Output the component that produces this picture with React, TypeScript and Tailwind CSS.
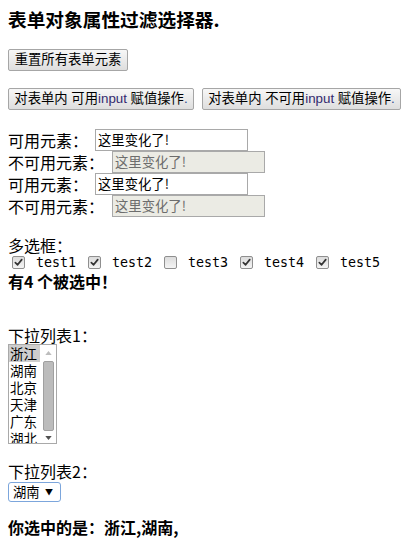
import React from "react";

const cjk = "font-['Noto_Sans_CJK_SC','Liberation_Sans',sans-serif]";
const ui = "font-['Liberation_Sans','Noto_Sans_CJK_SC',sans-serif]";

function OldButton({ width, children }: { width: string; children: React.ReactNode }) {
  return (
    <button
      type="button"
      className={`${width} ${ui} flex h-[22px] items-center justify-center rounded-[2px] border border-[#a6a6a6] bg-gradient-to-b from-[#f7f7f7] to-[#dedede] text-[13.33px] leading-none text-black`}
    >
      {children}
    </button>
  );
}

function Check({ checked }: { checked: boolean }) {
  return (
    <span className="ml-[4px] mr-[3px] flex h-[13px] w-[13px] items-center justify-center rounded-[2px] border border-[#8f8f8f] bg-gradient-to-b from-[#dcdcdc] to-[#f4f4f4]">
      {checked && (
        <svg viewBox="0 0 10 10" className="h-[9px] w-[9px]">
          <path d="M1.5 5.2 L4 7.6 L8.6 1.8" fill="none" stroke="#333" strokeWidth="1.9" strokeLinecap="round" strokeLinejoin="round" />
        </svg>
      )}
    </span>
  );
}

const items = [
  { label: "test1", checked: true },
  { label: "test2", checked: true },
  { label: "test3", checked: false },
  { label: "test4", checked: true },
  { label: "test5", checked: true },
];

const cities = ["浙江", "湖南", "北京", "天津", "广东", "湖北"];

function InputRow({ enabled }: { enabled: boolean }) {
  return (
    <div className="flex h-[22px] items-center">
      <span className={`${enabled ? "w-[87px]" : "w-[104px]"} text-[16px] leading-none`}>
        {enabled ? "可用元素：" : "不可用元素："}
      </span>
      <div
        className={`flex h-[22px] w-[153px] items-center border border-[#a9a9a9] px-[2px] text-[13.33px] ${
          enabled ? "bg-white text-black" : "bg-[#ebebe4] text-[#6d6d6d]"
        }`}
      >
        这里变化了!
      </div>
    </div>
  );
}

export default function App() {
  return (
    <div className={`${cjk} min-h-[550px] w-[415px] bg-white px-[8px] text-black`}>
      <h3 className="mt-[8px] h-[22px] text-[18.7px] font-bold leading-[22px]">表单对象属性过滤选择器.</h3>

      <div className="mt-[19px]">
        <OldButton width="w-[120px]">重置所有表单元素</OldButton>
      </div>

      <div className="mt-[17px] flex gap-[8px]">
        <OldButton width="w-[186px]">
          对表单内 可用<span className="text-[#33296f]">input</span>&nbsp;赋值操作<span className="text-[#2c4a8c]">.</span>
        </OldButton>
        <OldButton width="w-[199px]">
          对表单内 不可用<span className="text-[#33296f]">input</span>&nbsp;赋值操作<span className="text-[#2c4a8c]">.</span>
        </OldButton>
      </div>

      <div className="mt-[19px] flex flex-col">
        <InputRow enabled />
        <InputRow enabled={false} />
        <InputRow enabled />
        <InputRow enabled={false} />
      </div>

      <p className="mt-[19px] h-[18px] text-[16px] leading-[18px]">多选框：</p>
      <div className="flex h-[18px] items-center">
        {items.map((it) => (
          <div key={it.label} className="flex items-center">
            <Check checked={it.checked} />
            <span className="ml-[8px] mr-[8px] w-[40px] font-['DejaVu_Sans_Mono',monospace] text-[13.33px] leading-none">
              {it.label}
            </span>
          </div>
        ))}
      </div>
      <p className="h-[18px] text-[16px] font-bold leading-[18px]">有4 个被选中！</p>

      <p className="mt-[36px] h-[18px] text-[16px] leading-[18px]">下拉列表1：</p>
      <div className="flex h-[100px] w-[49px] overflow-hidden border border-[#a9a9a9] bg-white">
        <ul className="w-[31px] text-[13.5px]">
          {cities.map((c, i) => (
            <li
              key={c}
              className={`flex h-[17px] items-center pl-[1px] leading-[17px] ${i === 0 ? "bg-[#cecece]" : ""}`}
            >
              {c}
            </li>
          ))}
        </ul>
        <div className="flex w-[16px] flex-col items-center">
          <svg viewBox="0 0 8 5" className="mt-[6px] h-[4px] w-[7px]">
            <path d="M0 5 L4 0 L8 5 Z" fill="#bdbdbd" />
          </svg>
          <div className="mt-[6px] h-[70px] w-[11px] rounded-[2px] border border-[#a0a0a0] bg-[#bcbcbc]" />
          <svg viewBox="0 0 8 5" className="mt-[5px] h-[4px] w-[7px]">
            <path d="M0 0 L8 0 L4 5 Z" fill="#505050" />
          </svg>
        </div>
      </div>

      <p className="mt-[18px] h-[18px] text-[16px] leading-[18px]">下拉列表2：</p>
      <div className="mt-[2px] flex h-[20px] w-[53px] items-center justify-between rounded-[3px] border border-[#7ca6dc] bg-white pl-[4px] pr-[7px] text-[13.33px] leading-none">
        <span>湖南</span>
        <span className="text-[8px]">▼</span>
      </div>

      <p className="mt-[16px] h-[18px] text-[16px] font-bold leading-[18px]">你选中的是：浙江,湖南,</p>
    </div>
  );
}
